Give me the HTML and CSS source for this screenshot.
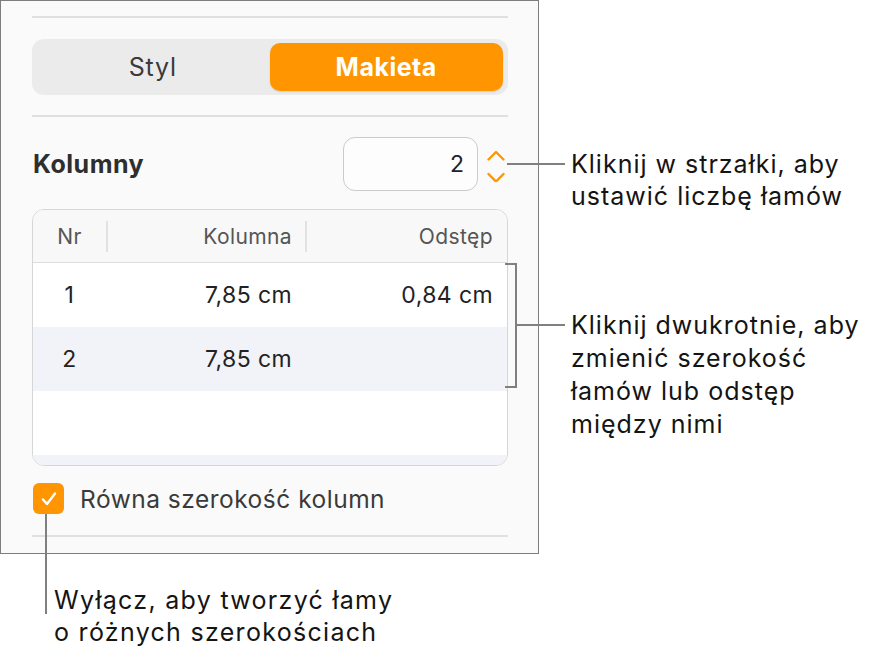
FILE: index.html
```html
<!DOCTYPE html>
<html lang="pl">
<head>
<meta charset="utf-8">
<link rel="stylesheet" href="styles.css">
</head>
<body>
<div class="canvas">
  <div class="panel">
    <div class="divider top"></div>
    <div class="segmented">
      <div class="seg">Styl</div>
      <div class="seg active">Makieta</div>
    </div>
    <div class="divider"></div>
    <div class="cols-row">
      <div class="cols-label">Kolumny</div>
      <div class="stepper">
        <div class="field">2</div>
        <svg class="arrows" width="20" height="40" viewBox="0 0 20 40">
          <path d="M2.5 17.5 L10 10 L17.5 17.5" fill="none" stroke="#ff9500" stroke-width="2.4" stroke-linecap="round" stroke-linejoin="round"/>
          <path d="M2.5 32 L10 39.5 L17.5 32" fill="none" stroke="#ff9500" stroke-width="2.4" stroke-linecap="round" stroke-linejoin="round"/>
        </svg>
      </div>
    </div>
    <div class="table">
      <div class="thead">
        <div class="th c-nr">Nr</div>
        <div class="th c-col sep">Kolumna</div>
        <div class="th c-gap sep">Odstęp</div>
      </div>
      <div class="tr">
        <div class="td c-nr">1</div>
        <div class="td c-col">7,85 cm</div>
        <div class="td c-gap">0,84 cm</div>
      </div>
      <div class="tr alt">
        <div class="td c-nr">2</div>
        <div class="td c-col">7,85 cm</div>
        <div class="td c-gap"></div>
      </div>
      <div class="tr">
        <div class="td c-nr"></div>
        <div class="td c-col"></div>
        <div class="td c-gap"></div>
      </div>
      <div class="tr tail"></div>
    </div>
    <div class="check-row">
      <span class="checkbox">
        <svg width="18" height="16" viewBox="0 0 18 16"><path d="M3 8.5 L7 13 L15 2.5" fill="none" stroke="#fff" stroke-width="2.4" stroke-linecap="round" stroke-linejoin="round"/></svg>
      </span>
      <span class="check-label">Równa szerokość kolumn</span>
    </div>
    <div class="divider bottom"></div>
  </div>

  <div class="leader l-step"></div>
  <div class="callout c-step">Kliknij w strzałki, aby<br>ustawić liczbę łamów</div>

  <div class="bracket"></div>
  <div class="leader l-table"></div>
  <div class="callout c-table">Kliknij dwukrotnie, aby<br>zmienić szerokość<br>łamów lub odstęp<br>między nimi</div>

  <div class="vleader"></div>
  <div class="callout c-check">Wyłącz, aby tworzyć łamy<br>o różnych szerokościach</div>
</div>
</body>
</html>
```

FILE: styles.css
```css
* { box-sizing: border-box; }
html, body { margin: 0; padding: 0; background: #fff; }
body { font-family: Inter, "Noto Sans", "Liberation Sans", sans-serif; }

.canvas { position: relative; width: 875px; height: 657px; }

.panel {
  width: 539px;
  height: 554px;
  background: #fafafa;
  border: 1px solid #7d7d7d;
  padding: 0 30px 0 31px;
  display: flex;
  flex-direction: column;
}

.divider { height: 2px; background: #e0e0e0; margin-top: 20px; flex: none; }
.divider.top { margin-top: 15px; }
.divider.bottom { margin-top: 21px; }

.segmented {
  margin-top: 21px;
  height: 56px;
  background: #ebebeb;
  border-radius: 12px;
  padding: 4px 5px 4px 0;
  display: flex;
}
.seg {
  flex: 1;
  display: flex;
  align-items: center;
  justify-content: center;
  font-size: 25px;
  letter-spacing: 0.8px;
  color: #3a3a3a;
  border-radius: 10px;
  padding-left: 4px;
}
.seg.active {
  background: #ff9500;
  color: #fff;
  font-weight: 700;
  letter-spacing: 0.5px;
  padding-left: 0;
  box-shadow: 0 1px 2px rgba(0,0,0,0.12);
}

.cols-row {
  margin-top: 20px;
  display: flex;
  align-items: center;
  justify-content: space-between;
}
.cols-label { font-size: 25px; font-weight: 700; letter-spacing: 0.5px; color: #2e2e2e; padding-left: 1px; }
.stepper { display: flex; align-items: center; }
.field {
  width: 135px;
  height: 54px;
  border: 1.5px solid #cbcbcb;
  border-radius: 12px;
  background: #fdfdfd;
  font-size: 23px;
  color: #222;
  display: flex;
  align-items: center;
  justify-content: flex-end;
  padding-right: 13px;
}
.arrows { display: block; margin-left: 8px; margin-right: 2px; margin-top: -4px; }

.table {
  margin-top: 18px;
  height: 257px;
  border: 1.5px solid #d6d6d6;
  border-radius: 12px;
  overflow: hidden;
  background: #fff;
  display: flex;
  flex-direction: column;
}
.thead {
  height: 53px;
  flex: none;
  display: flex;
  background: #f8f8f8;
  border-bottom: 1.5px solid #dedede;
  align-items: center;
}
.th { font-size: 21px; letter-spacing: 0.4px; color: #555; height: 31px; display: flex; align-items: center; }
.th.sep { border-left: 2px solid #e2e2e2; }
.tr { height: 64px; flex: none; display: flex; align-items: center; background: #fff; }
.tr.alt { background: #f2f3f8; }
.tr.tail { flex: 1; height: auto; background: #f2f3f8; }
.td { font-size: 23px; letter-spacing: 0.4px; color: #222; display: flex; align-items: center; }
.c-nr { width: 73px; justify-content: center; text-align: center; }
.c-col { width: 199px; justify-content: flex-end; text-align: right; padding-right: 13px; }
.c-gap { flex: 1; justify-content: flex-end; text-align: right; padding-right: 14px; }

.check-row {
  margin-top: 17px;
  display: flex;
  align-items: center;
  height: 31px;
}
.checkbox {
  width: 31px;
  height: 31px;
  border-radius: 6px;
  background: #ff9500;
  display: flex;
  align-items: center;
  justify-content: center;
  margin-left: 1px;
  flex: none;
}
.checkbox svg { display: block; }
.check-label { margin-left: 16px; font-size: 24.5px; letter-spacing: 0.5px; color: #3a3a3a; }

.leader { position: absolute; height: 2px; background: #808080; }
.l-step { left: 507px; top: 163px; width: 58px; }
.l-table { left: 516px; top: 324px; width: 49px; }
.bracket {
  position: absolute;
  left: 505px;
  top: 263px;
  width: 12px;
  height: 125px;
  border: 2px solid #808080;
  border-left: none;
}
.vleader { position: absolute; left: 45px; top: 514px; width: 2px; height: 100px; background: #808080; }

.callout {
  position: absolute;
  font-size: 25px;
  letter-spacing: 1px;
  line-height: 33px;
  color: #141414;
  white-space: nowrap;
}
.c-step { left: 571px; top: 148px; line-height: 32px; }
.c-table { left: 571px; top: 309px; }
.c-check { left: 54px; top: 584px; line-height: 32px; letter-spacing: 1.3px; }
```
